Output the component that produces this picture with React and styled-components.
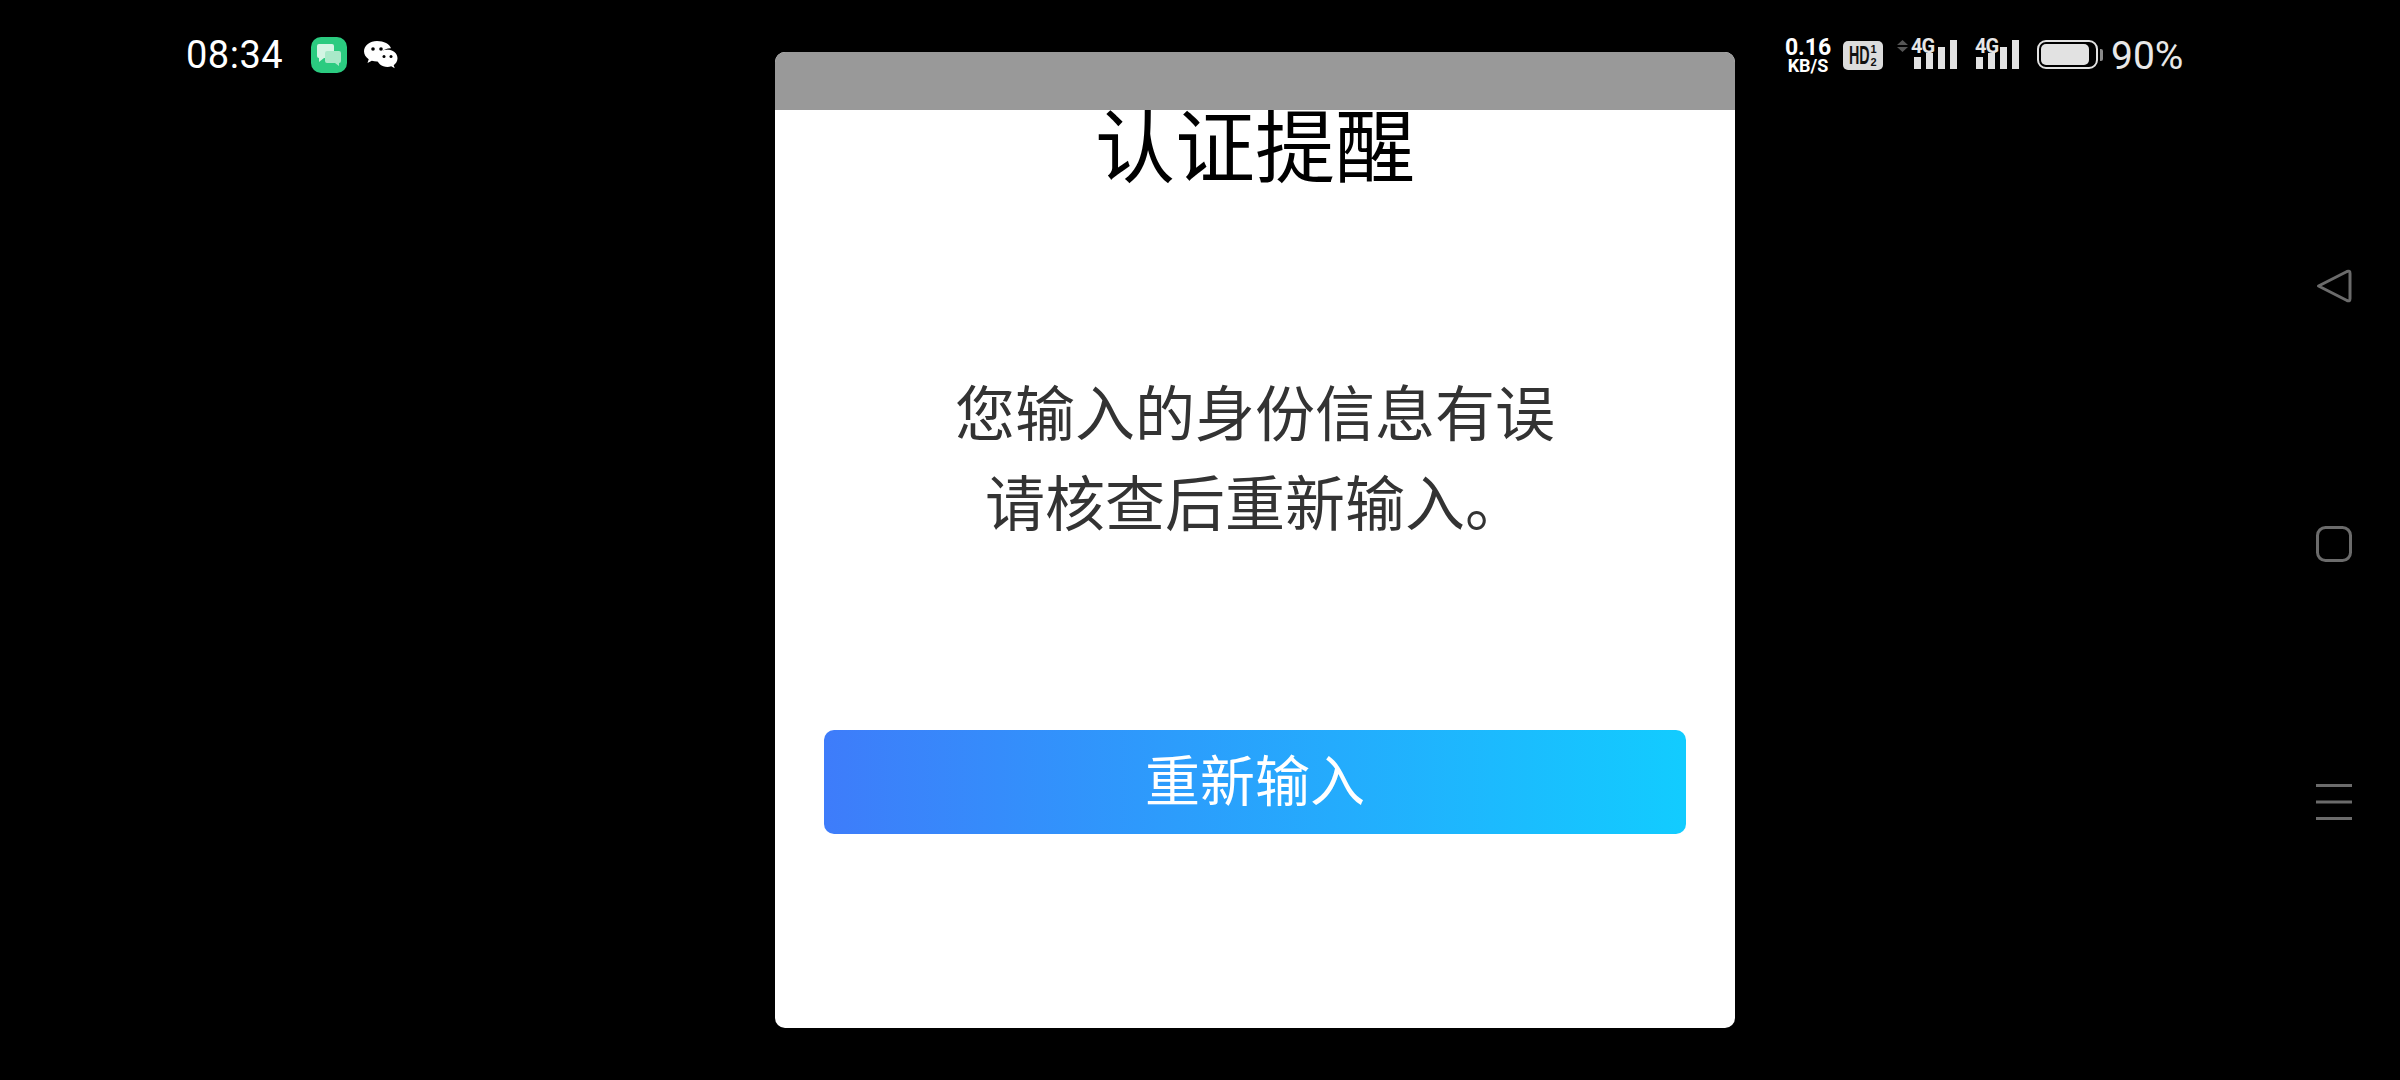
import React from 'react';
import styled, { createGlobalStyle } from 'styled-components';

const GlobalStyle = createGlobalStyle`
  html, body {
    margin: 0;
    padding: 0;
    background: #000;
  }
  body {
    font-family: "Noto Sans CJK SC", "Noto Sans", sans-serif;
  }
`;

const Screen = styled.div`
  width: 2400px;
  height: 1080px;
  background: #000;
  display: grid;
  grid-template-columns: 775px 960px 1fr;
  overflow: hidden;
`;

const StatusLeft = styled.div`
  display: flex;
  align-items: center;
  height: 36px;
  padding: 37px 0 0 186px;
`;

const Time = styled.div`
  width: 125px;
  color: #fff;
  font-family: Roboto, sans-serif;
  font-size: 38px;
  line-height: 36px;
  letter-spacing: 0.5px;
`;

const AppBadge = styled.div`
  width: 36px;
  height: 36px;
  border-radius: 10px;
  background: #2bcb80;
  display: flex;
  align-items: center;
  justify-content: center;
  margin-right: 17px;
`;

const Modal = styled.div`
  height: 976px;
  margin-top: 52px;
  border-radius: 10px;
  background: #fff;
  overflow: hidden;
  display: flex;
  flex-direction: column;
  align-items: center;
`;

const ModalHeader = styled.div`
  align-self: stretch;
  height: 58px;
  flex-shrink: 0;
  background: #999;
  position: relative;
  z-index: 1;
`;

const Title = styled.h1`
  margin: -9px 0 0;
  font-size: 80px;
  line-height: 80px;
  font-weight: 400;
  color: #000;
`;

const Message = styled.p`
  margin: 184px 0 0;
  font-size: 60px;
  line-height: 90px;
  color: #333;
  text-align: center;
`;

const PrimaryButton = styled.button`
  width: 862px;
  height: 104px;
  margin-top: 185px;
  padding: 0 0 10px;
  border: 0;
  border-radius: 10px;
  background: linear-gradient(90deg, #3e7cfa, #12ccff);
  color: #fff;
  font-family: inherit;
  font-size: 55px;
  line-height: 94px;
`;

const RightSide = styled.div`
  display: grid;
  grid-template-columns: 1fr 36px;
  padding-right: 48px;
`;

const StatusRight = styled.div`
  display: flex;
  align-items: flex-start;
  height: 36px;
  padding: 38px 0 0 50px;
  color: #e6e6e6;
`;

const Speed = styled.div`
  width: 46px;
  display: flex;
  flex-direction: column;
  align-items: center;
  margin-right: 12px;
  color: #fff;
  font-family: Roboto, sans-serif;
  font-weight: 700;
`;

const SpeedValue = styled.span`
  font-size: 23px;
  line-height: 20px;
`;

const SpeedUnit = styled.span`
  font-size: 18px;
  line-height: 15px;
`;

const HdBadge = styled.div`
  width: 40px;
  height: 29px;
  margin: 3px 12px 0 0;
  border-radius: 5px;
  background: #dcdcdc;
  color: #111;
  display: flex;
  align-items: center;
  justify-content: center;
  gap: 1px;
  font-family: "Liberation Sans", sans-serif;
  font-weight: 700;
`;

const HdLetters = styled.span`
  display: block;
  width: 20px;
  font-size: 26px;
  line-height: 29px;
  transform: scaleX(0.55);
  transform-origin: left center;
  white-space: nowrap;
`;

const HdFraction = styled.span`
  display: flex;
  flex-direction: column;
  align-items: center;
  font-size: 11px;
  line-height: 13px;
`;

const Signal = styled.div`
  position: relative;
  width: ${p => p.$width}px;
  height: 31px;
  margin-left: ${p => p.$gap}px;
`;

const NetLabel = styled.span`
  position: absolute;
  top: 0;
  left: ${p => p.$left}px;
  color: #e6e6e6;
  font-family: Roboto, sans-serif;
  font-size: 20px;
  line-height: 16px;
  font-weight: 700;
  letter-spacing: -1px;
`;

const Bars = styled.div`
  position: absolute;
  right: 0;
  bottom: 0;
  display: flex;
  align-items: flex-end;
  gap: 5px;
`;

const Bar = styled.span`
  display: block;
  width: 7px;
  height: ${p => p.$height}px;
  background: #e2e2e2;
`;

const Arrows = styled.svg`
  position: absolute;
  left: 0;
  top: 2px;
`;

const Battery = styled.div`
  width: 61px;
  height: 29px;
  box-sizing: border-box;
  margin: 2px 0 0 18px;
  padding: 2px;
  border: 2px solid #e2e2e2;
  border-radius: 9px;
`;

const BatteryFill = styled.div`
  width: ${p => p.$level}%;
  height: 100%;
  border-radius: 5px;
  background: #e2e2e2;
`;

const BatteryNub = styled.div`
  width: 3px;
  height: 12px;
  margin: 11px 8px 0 2px;
  border-radius: 0 2px 2px 0;
  background: #8a8a8a;
`;

const Percent = styled.div`
  color: #e8e8e8;
  font-family: Roboto, sans-serif;
  font-size: 39px;
  line-height: 36px;
`;

const NavColumn = styled.nav`
  display: flex;
  flex-direction: column;
  gap: 222px;
  padding-top: 268px;
`;

const BubblesIcon = () => (
  <svg width="26" height="24" viewBox="0 0 26 24">
    <path d="M3 1h13a2 2 0 0 1 2 2v10a2 2 0 0 1-2 2H8l-5 4v-4a2 2 0 0 1-2-2V3a2 2 0 0 1 2-2z" fill="#d4f5e4" />
    <path d="M11 8h12a2 2 0 0 1 2 2v8a2 2 0 0 1-2 2v3l-4-3h-8a2 2 0 0 1-2-2v-8a2 2 0 0 1 2-2z" fill="#a9e9c9" />
  </svg>
);

const WeChatIcon = () => (
  <svg width="34" height="28" viewBox="0 0 34 28">
    <path d="M13 0C6 0 0 4.600 0 10.300c0 3.200 1.800 6 4.700 8l-1.200 3.700 4.300-2.300c1.600.5 3.400.8 5.200.8.500 0 1 0 1.500-.1C14 12 20 7 27 7.300 25.600 3 19.900 0 13 0z" fill="#fff" />
    <path d="M23.500 8.500C17.700 8.500 13 12.400 13 17.200s4.700 8.700 10.500 8.700c1.300 0 2.500-.2 3.700-.6l3.500 2-1-3.100c2.300-1.600 3.800-4.200 3.800-7 0-4.800-4.700-8.700-10.500-8.700z" fill="#fff" />
    <circle cx="9" cy="8" r="1.800" fill="#000" />
    <circle cx="17" cy="8" r="1.800" fill="#000" />
    <circle cx="20" cy="15.500" r="1.500" fill="#000" />
    <circle cx="27" cy="15.500" r="1.500" fill="#000" />
  </svg>
);

const BackIcon = () => (
  <svg width="36" height="36" viewBox="0 0 36 36" fill="none" stroke="#6b6b6b" strokeWidth="3" strokeLinejoin="round">
    <path d="M2.500 18 31 3.500q3-1.300 3 2v25q0 3.300-3 2z" />
  </svg>
);

const HomeIcon = () => (
  <svg width="36" height="36" viewBox="0 0 36 36" fill="none" stroke="#6b6b6b" strokeWidth="3">
    <rect x="1.500" y="1.500" width="33" height="33" rx="8" />
  </svg>
);

const MenuIcon = () => (
  <svg width="36" height="36" viewBox="0 0 36 36" stroke="#6b6b6b" strokeWidth="3">
    <path d="M0 1.500h36M0 18h36M0 34.500h36" />
  </svg>
);

const SignalBars = () => (
  <Bars>
    {[12, 16, 22, 29].map(height => (
      <Bar key={height} $height={height} />
    ))}
  </Bars>
);

const App = () => {
  return (
    <>
      <GlobalStyle />
      <Screen>
        <StatusLeft>
          <Time>08:34</Time>
          <AppBadge>
            <BubblesIcon />
          </AppBadge>
          <WeChatIcon />
        </StatusLeft>

        <Modal>
          <ModalHeader />
          <Title>认证提醒</Title>
          <Message>
            您输入的身份信息有误
            <br />
            请核查后重新输入。
          </Message>
          <PrimaryButton>重新输入</PrimaryButton>
        </Modal>

        <RightSide>
          <StatusRight>
            <Speed>
              <SpeedValue>0.16</SpeedValue>
              <SpeedUnit>KB/S</SpeedUnit>
            </Speed>
            <HdBadge>
              <HdLetters>HD</HdLetters>
              <HdFraction>
                <span>1</span>
                <span>2</span>
              </HdFraction>
            </HdBadge>
            <Signal $width={60} $gap={2}>
              <Arrows width="11" height="12" viewBox="0 0 11 12" fill="#555">
                <path d="M5.500 0 11 5H0zM0 7h11l-5.500 5z" />
              </Arrows>
              <NetLabel $left={14}>4G</NetLabel>
              <SignalBars />
            </Signal>
            <Signal $width={44} $gap={18}>
              <NetLabel $left={0}>4G</NetLabel>
              <SignalBars />
            </Signal>
            <Battery>
              <BatteryFill $level={90} />
            </Battery>
            <BatteryNub />
            <Percent>90%</Percent>
          </StatusRight>
          <NavColumn>
            <BackIcon />
            <HomeIcon />
            <MenuIcon />
          </NavColumn>
        </RightSide>
      </Screen>
    </>
  );
};

export default App;
